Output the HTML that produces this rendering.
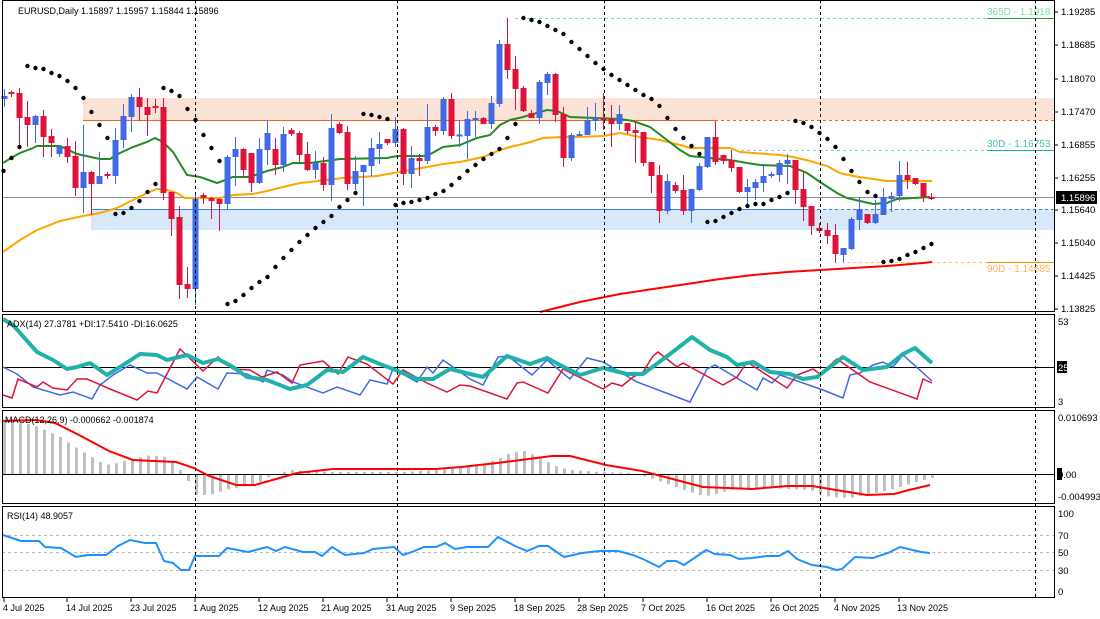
<!DOCTYPE html>
<html><head><meta charset="utf-8">
<style>
html,body{margin:0;padding:0;background:#fff;}
svg{display:block;font-family:"Liberation Sans",sans-serif;font-size:9px;}
</style></head>
<body>
<svg id="c" width="1100" height="619" viewBox="0 0 1100 619" xmlns="http://www.w3.org/2000/svg">
<rect width="1100" height="619" fill="#fff"/>
<!-- zones -->
<rect x="83" y="98" width="971" height="22" fill="#fbe3d8"/>
<rect x="91" y="209" width="963" height="21" fill="#d9e8f8"/>
<line x1="83" y1="120.5" x2="715" y2="120.5" stroke="#f06020" stroke-width="1"/>
<line x1="715" y1="120.5" x2="1054" y2="120.5" stroke="#f06020" stroke-dasharray="3,3"/>
<line x1="91" y1="209.5" x2="805" y2="209.5" stroke="#3c86d8" stroke-width="1"/>
<line x1="805" y1="209.5" x2="1054" y2="209.5" stroke="#3c86d8" stroke-dasharray="3,3"/>
<line x1="515" y1="18.5" x2="987" y2="18.5" stroke="#7fdca0" stroke-dasharray="3,3"/>
<line x1="987" y1="18.5" x2="1054" y2="18.5" stroke="#22a040"/>
<line x1="735" y1="150.5" x2="987" y2="150.5" stroke="#80d8c8" stroke-dasharray="3,3"/>
<line x1="987" y1="150.5" x2="1054" y2="150.5" stroke="#20b0a0"/>
<line x1="847" y1="262.5" x2="987" y2="262.5" stroke="#ffc080" stroke-dasharray="3,3"/>
<line x1="987" y1="262.5" x2="1054" y2="262.5" stroke="#ff8c00"/>
<line x1="2" y1="197.5" x2="1054" y2="197.5" stroke="#8a8f98"/>
<text x="987" y="15" fill="#7fdca0" font-size="10">365D - 1.1918</text>
<text x="987" y="147" fill="#40c0b0" font-size="10">30D - 1.16753</text>
<text x="987" y="272" fill="#ffb060" font-size="10">90D - 1.14685</text>
<!-- MAs -->
<polyline fill="none" stroke="#ffa500" stroke-width="2" points="3,252 20,240 37,230 60,221 83,216 100,213 117,208 133,200 147,193 157,189 167,190 177,193 185,198 200,198 220,198 233,195 253,194 267,191 283,187 300,183 310,182 343,178 377,176 410,170 427,167 443,164 460,162 483,157 493,153 500,150 510,147 527,143 543,138 563,137 577,137 603,136 620,133 640,137 660,140 680,145 690,148 730,148 740,152 780,155 793,157 810,161 827,166 840,173 853,176 873,179 887,181 932,181"/>
<polyline fill="none" stroke="#228b22" stroke-width="2" points="3,163 11,158 20,153 33,148 37,146 60,146 77,154 100,159 110,159 120,153 133,147 147,142 155,138 163,142 173,152 187,175 200,177 217,183 233,177 250,177 267,171 283,167 293,163 310,163 340,159 387,158 397,156 427,156 443,147 460,145 477,138 490,135 500,125 510,120 523,117 547,110 557,111 570,117 620,119 633,121 650,127 667,140 680,150 690,156 700,157 730,160 747,163 760,165 790,166 807,173 820,182 837,193 847,198 873,204 887,203 897,199 930,197"/>
<polyline fill="none" stroke="#ff0000" stroke-width="2" points="540,312 580,302 620,294 653,289 687,284 720,279 753,275 787,272 820,270 853,268 887,266 923,263 932,262"/>
<g id="candles"></g>
<g id="sar" fill="#000"></g>

<!-- ADX -->
<line x1="2" y1="367.5" x2="1054" y2="367.5" stroke="#000"/>
<polyline fill="none" stroke="#4169e1" stroke-width="1.5" points="3,367 17,374 33,387 60,395 73,392 92,399 100,385 113,375 130,365 147,373 157,373 187,389 197,377 218,389 227,373 247,374 263,382 267,370 283,375 293,382 323,393 337,387 360,395 370,380 387,384 393,369 417,382 427,367 433,373 443,360 470,379 483,385 498,357 508,356 532,375 547,360 570,379 587,358 603,362 637,382 690,402 707,369 715,365 757,390 763,378 772,383 780,375 823,390 843,398 850,375 860,373 873,365 883,362 893,367 903,355 932,381"/>
<polyline fill="none" stroke="#dc143c" stroke-width="1.5" points="3,395 12,398 18,379 37,387 43,382 53,388 67,390 77,379 87,379 110,389 137,400 148,391 157,393 180,349 203,371 218,357 233,369 250,370 262,377 277,372 292,383 300,365 323,361 338,374 348,357 367,364 393,384 403,370 427,383 447,392 460,385 470,386 507,399 517,383 523,382 548,393 563,369 603,389 612,383 622,386 633,377 643,372 653,356 658,352 677,367 683,363 723,385 737,377 747,362 787,388 797,375 813,369 820,374 837,359 870,382 917,399 923,379 932,383"/>
<polyline fill="none" stroke="#20b2aa" stroke-width="4" stroke-linejoin="round" points="3,319 13,325 37,352 53,360 67,369 77,367 90,363 107,375 120,367 140,354 157,355 167,360 187,355 203,363 218,359 233,367 247,377 267,380 290,389 307,385 327,370 343,372 363,357 380,364 393,369 417,379 433,379 450,369 470,374 483,377 507,356 530,364 547,358 560,365 580,375 603,368 627,374 643,374 670,354 692,337 710,350 727,357 737,365 753,362 770,372 790,374 803,379 817,377 830,367 843,357 863,370 887,367 903,354 915,348 932,363"/>

<!-- MACD -->
<g id="hist" fill="#c0c0c0"></g>
<line x1="2" y1="474.5" x2="1054" y2="474.5" stroke="#000"/>
<polyline fill="none" stroke="#ff0000" stroke-width="2" points="3,421 36,420 55,423 79,435 109,451 133,460 176,462 194,468 209,476 236,485 255,485 297,473 333,469 364,469 436,469 461,467 497,463 552,456 570,456 606,465 642,471 703,487 752,489 788,486 812,486 836,490 867,495 894,494 909,490 930,485"/>

<!-- RSI -->
<g stroke="#b8b8b8" stroke-dasharray="3,3">
<line x1="2" y1="535.5" x2="1054" y2="535.5"/>
<line x1="2" y1="552.5" x2="1054" y2="552.5"/>
<line x1="2" y1="570.5" x2="1054" y2="570.5"/>
</g>
<polyline fill="none" stroke="#1e90ff" stroke-width="2" points="3,535 21,541 39,541 45,547 61,548 76,557 88,555 106,555 118,546 130,540 145,543 156,543 164,561 173,563 181,570 189,570 195,556 219,556 227,548 248,552 267,547 276,551 285,547 303,552 315,552 322,556 332,547 345,555 364,553 373,549 394,547 403,555 412,552 424,547 436,547 445,543 455,549 467,547 488,547 498,537 515,546 527,551 539,546 548,546 564,557 582,553 600,551 618,551 633,555 645,560 659,567 667,561 676,561 684,565 706,550 715,554 730,555 739,559 752,558 767,556 779,556 788,551 797,559 812,565 827,567 836,570 842,569 855,557 873,558 888,553 900,547 921,552 930,553"/>

<!-- vertical dashed separators -->
<g stroke="#000" stroke-dasharray="3,3">
<line x1="195.5" y1="0" x2="195.5" y2="598"/>
<line x1="397.5" y1="0" x2="397.5" y2="598"/>
<line x1="604.5" y1="0" x2="604.5" y2="598"/>
<line x1="820.5" y1="0" x2="820.5" y2="598"/>
<line x1="1035.5" y1="0" x2="1035.5" y2="598"/>
</g>

<!-- panel frames -->
<g fill="none" stroke="#000">
<rect x="2.5" y="0.5" width="1052" height="311"/>
<rect x="2.5" y="314.5" width="1052" height="93"/>
<rect x="2.5" y="410.5" width="1052" height="93"/>
<rect x="2.5" y="506.5" width="1052" height="91"/>
</g>

<!-- labels -->
<g fill="#000">
<text x="18" y="14">EURUSD,Daily  1.15897 1.15957 1.15844 1.15896</text>
<text x="7" y="327">ADX(14) 27.3781 +DI:17.5410 -DI:16.0625</text>
<text x="5" y="423">MACD(12,26,9) -0.000662 -0.001874</text>
<text x="7" y="519">RSI(14) 48.9057</text>
</g>

<!-- price axis -->
<g fill="#000" font-size="9.5">
<text x="1061" y="15">1.19285</text>
<text x="1061" y="48">1.18685</text>
<text x="1061" y="82">1.18070</text>
<text x="1061" y="115">1.17470</text>
<text x="1061" y="148">1.16855</text>
<text x="1061" y="181">1.16255</text>
<text x="1061" y="213">1.15640</text>
<text x="1061" y="246">1.15040</text>
<text x="1061" y="279">1.14425</text>
<text x="1061" y="312">1.13825</text>
<rect x="1056" y="191" width="41" height="13" fill="#000"/>
<text x="1061" y="201" fill="#fff">1.15896</text>
<text x="1058" y="325">53</text>
<rect x="1057" y="361" width="10" height="12" fill="#000"/>
<text x="1058" y="371" fill="#fff">25</text>
<text x="1058" y="405">3</text>
<text x="1058" y="421">0.010693</text>
<rect x="1057" y="468" width="5" height="12" fill="#000"/>
<text x="1058" y="478">0.00</text>
<text x="1058" y="500">-0.004993</text>
<text x="1058" y="517">100</text>
<text x="1058" y="539">70</text>
<text x="1058" y="556">50</text>
<text x="1058" y="574">30</text>
<text x="1058" y="595">0</text>
</g>
<g stroke="#000">
<line x1="1054" y1="12" x2="1058" y2="12"/><line x1="1054" y1="45" x2="1058" y2="45"/><line x1="1054" y1="79" x2="1058" y2="79"/><line x1="1054" y1="112" x2="1058" y2="112"/><line x1="1054" y1="145" x2="1058" y2="145"/><line x1="1054" y1="178" x2="1058" y2="178"/><line x1="1054" y1="210" x2="1058" y2="210"/><line x1="1054" y1="243" x2="1058" y2="243"/><line x1="1054" y1="276" x2="1058" y2="276"/><line x1="1054" y1="309" x2="1058" y2="309"/>
</g>
<!-- dates -->
<g fill="#000" font-size="9">
<text x="3" y="611">4 Jul 2025</text>
<text x="66" y="611">14 Jul 2025</text>
<text x="130" y="611">23 Jul 2025</text>
<text x="193" y="611">1 Aug 2025</text>
<text x="258" y="611">12 Aug 2025</text>
<text x="321" y="611">21 Aug 2025</text>
<text x="386" y="611">31 Aug 2025</text>
<text x="450" y="611">9 Sep 2025</text>
<text x="514" y="611">18 Sep 2025</text>
<text x="577" y="611">28 Sep 2025</text>
<text x="641" y="611">7 Oct 2025</text>
<text x="706" y="611">16 Oct 2025</text>
<text x="770" y="611">26 Oct 2025</text>
<text x="834" y="611">4 Nov 2025</text>
<text x="897" y="611">13 Nov 2025</text>
</g>
<g stroke="#000">
<line x1="4" y1="598" x2="4" y2="602"/><line x1="67" y1="598" x2="67" y2="602"/><line x1="131" y1="598" x2="131" y2="602"/><line x1="195" y1="598" x2="195" y2="602"/><line x1="259" y1="598" x2="259" y2="602"/><line x1="323" y1="598" x2="323" y2="602"/><line x1="387" y1="598" x2="387" y2="602"/><line x1="451" y1="598" x2="451" y2="602"/><line x1="515" y1="598" x2="515" y2="602"/><line x1="579" y1="598" x2="579" y2="602"/><line x1="643" y1="598" x2="643" y2="602"/><line x1="707" y1="598" x2="707" y2="602"/><line x1="771" y1="598" x2="771" y2="602"/><line x1="835" y1="598" x2="835" y2="602"/><line x1="899" y1="598" x2="899" y2="602"/>
</g>
</svg>
<script>
var NS="http://www.w3.org/2000/svg";
function el(p,t,a){var e=document.createElementNS(NS,t);for(var k in a)e.setAttribute(k,a[k]);p.appendChild(e);return e;}
var C=[[4,99,96,89,107],[11,92,93,91,97],[19,93,118,88,147],[27,117,125,101,147],[35,125,116,115,143],[43,116,137,110,157],[51,136,143,129,157],[59,154,146,146,157],[67,146,157,138,163],[75,156,188,141,196],[83,188,172,125,213],[91,172,184,171,215],[99,184,176,152,184],[107,174,176,172,179],[115,176,140,128,184],[123,140,116,104,148],[131,117,97,94,132],[139,97,107,88,121],[147,107,115,98,136],[155,106,108,99,113],[163,107,193,98,200],[171,192,219,192,236],[179,217,285,206,299],[187,284,289,267,298],[195,289,199,193,305],[203,195,198,193,204],[211,198,201,197,219],[219,199,204,198,231],[227,204,157,155,210],[235,157,149,137,186],[243,149,170,148,177],[251,153,183,153,192],[259,183,149,138,184],[267,150,133,120,165],[275,149,165,138,175],[283,165,134,127,172],[291,130,134,128,136],[299,133,155,131,162],[307,154,170,142,171],[315,170,163,151,179],[323,163,185,157,191],[331,185,128,114,201],[339,124,133,122,134],[347,132,184,126,190],[355,184,171,156,190],[363,172,165,165,206],[371,166,148,138,176],[379,149,144,132,164],[387,139,143,139,145],[395,143,129,117,147],[403,129,174,128,185],[411,174,158,146,188],[419,158,161,154,176],[427,161,127,104,164],[435,127,131,125,136],[443,131,99,97,135],[451,99,136,93,139],[459,135.5,134.5,120,147],[467,136,119,111,159],[475,120,118,111,137],[483,118,124,117,124],[491,124,103,96,129],[499,104,44,40,107],[507,44,70,18,79],[515,69,89,56,110],[523,88,111,86,112],[531,113,118,110,118],[539,118,82,80,124],[547,83,74,72,95],[555,74,115,73,122],[563,114,158,107,167],[571,158,135,133,161],[579,136,134,131,136],[587,135,120,107,135],[595,121,118,103,131],[603,118,120,93,130],[611,119,124,105,147],[619,124,114,105,130],[627,123,131,123,134],[635,130,133,121,163],[643,132,163,132,166],[651,162,176,162,193],[659,175,211,165,223],[667,211,181,174,214],[675,185,191,182,193],[683,190,211,175,215],[691,211,189,189,223],[699,190,166,163,191],[707,167,137,137,168],[715,137,162,121,165],[723,155,161,155,164],[731,160,168,150,172],[739,167,192,167,193],[747,192,187,179,205],[755,188,182,179,200],[763,183,176,164,192],[771,176,174,172,178],[779,175,163,160,182],[787,164,160,154,184],[795,160,190,160,204],[803,189,207,171,221],[811,206,226,206,235],[819,228,231,223,233],[827,230,236,223,244],[835,235,254,224,263],[843,255,248,248,263],[851,249,219,217,250],[859,220,209,197,230],[867,214,223,214,224],[875,223,214,200,224],[883,215,197,188,215],[891,199,196,192,212],[899,196,175,161,201],[907,175,180,162,189],[915,178,184,178,185],[923,183,197,183,202],[931,197,198,193,200]];
var g=document.getElementById("candles");
C.forEach(function(c){var x=c[0],o=c[1],cl=c[2],h=c[3],l=c[4];var up=cl<o;var col=up?"#4169e1":"#dc143c";
el(g,"line",{x1:x+0.5,y1:h,x2:x+0.5,y2:l,stroke:col,"stroke-width":1});
var t=Math.min(o,cl),b=Math.max(o,cl);if(b-t<2){b=t+2;}
el(g,"rect",{x:x-2.5,y:t,width:6,height:b-t,fill:col});});
var S=[[3,171],[11,158],[19,147],[27,66],[35,68],[43,69],[51,73],[59,76],[67,81],[75,88],[83,98],[91,112],[99,125],[107,138],[115,214],[123,213],[131,208],[139,201],[147,192],[155,184],[163,88],[171,91],[179,96],[187,109],[195,120],[203,135],[211,148],[219,161],[227,304],[235,301],[243,295],[251,288],[259,282],[267,277],[275,267],[283,258],[291,250],[299,242],[307,235],[315,228],[323,222],[331,216],[339,207],[347,200],[355,193],[363,114],[371,115],[379,117],[387,119],[395,205],[403,203],[411,202],[419,200],[427,198],[435,194],[443,191],[451,185],[459,178],[467,171],[475,165],[483,159],[491,154],[499,149],[507,138],[515,124],[523,18],[531,20],[539,22],[547,26],[555,30],[563,34],[571,42],[579,49],[587,56],[595,63],[603,69],[611,75],[619,80],[627,85],[635,90],[643,95],[651,99],[659,106],[667,118],[675,129],[683,138],[691,146],[699,154],[707,222],[715,221],[723,217],[731,213],[739,209],[747,206],[755,204],[763,204],[771,200],[779,197],[787,193],[795,121],[803,123],[811,127],[819,133],[827,139],[835,147],[843,159],[851,171],[859,182],[867,192],[875,196],[883,262],[891,261],[899,259],[907,255],[915,252],[923,248],[931,244]];
var s=document.getElementById("sar");
S.forEach(function(p){el(s,"circle",{cx:p[0]+0.5,cy:p[1],r:2.2});});
var M=[[3,422],[30,424],[45,430],[60,437],[75,447],[90,456],[100,462],[110,465],[120,462],[150,455],[165,457],[175,465],[185,475],[195,495],[210,495],[225,490],[240,487],[255,485],[270,476],[290,470],[310,471],[330,472],[360,472],[400,472],[440,470],[460,468],[480,465],[500,458],[510,453],[525,451],[540,458],[555,466],[570,470],[600,472],[630,473],[650,478],[670,485],[690,492],[700,495],[710,496],[730,490],[760,488],[790,489],[810,490],[830,497],[850,498],[870,494],[890,490],[910,484],[930,478]];
function mv(x){for(var i=0;i<M.length-1;i++){if(x>=M[i][0]&&x<=M[i+1][0]){var f=(x-M[i][0])/(M[i+1][0]-M[i][0]);return M[i][1]+f*(M[i+1][1]-M[i][1]);}}return M[M.length-1][1];}
var hg=document.getElementById("hist");
for(var x=4;x<=932;x+=8){var v=mv(x);var t=Math.min(v,474),b=Math.max(v,474);el(hg,"rect",{x:x-1,y:t,width:3,height:Math.max(1,b-t)});}
</script>
</body></html>
